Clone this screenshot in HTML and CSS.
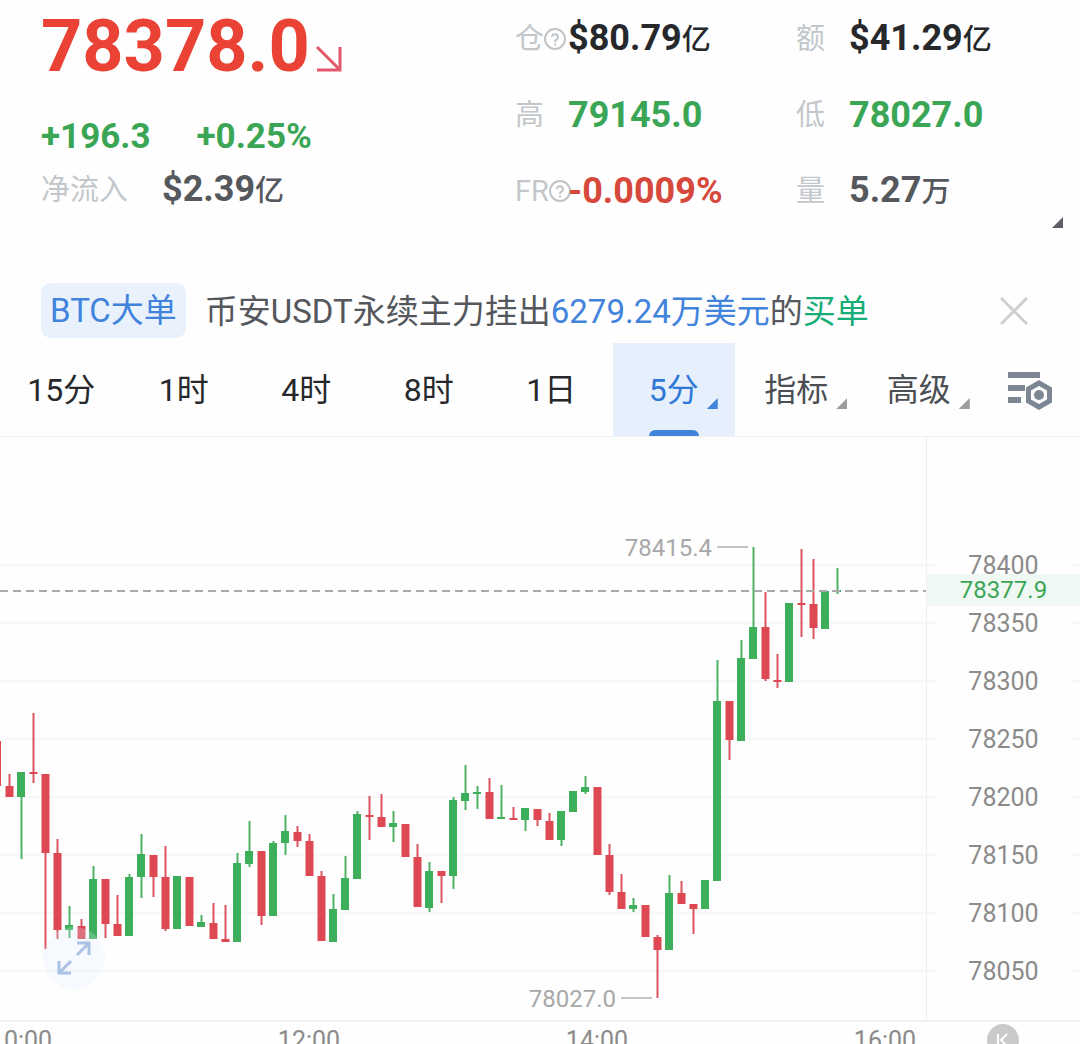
FILE: index.html
```html
<!DOCTYPE html>
<html lang="zh-CN">
<head>
<meta charset="utf-8">
<meta name="viewport" content="width=device-width, initial-scale=1">
<title>BTC 行情</title>
<link rel="stylesheet" href="styles.css">
</head>
<body>
<main class="app">
  <header class="quote">
    <section class="summary">
      <div class="price">
        <strong>78378.0</strong>
        <svg class="price-arrow" width="26" height="26" viewBox="0 0 26 26" fill="none" stroke="#e4586c" stroke-width="3"><path d="M1 1L24 24M1 24H24V1"/></svg>
      </div>
      <div class="change"><span>+196.3</span><span>+0.25%</span></div>
      <div class="inflow"><span class="label">净流入</span><span class="value muted">$2.39<span class="unit">亿</span></span></div>
    </section>
    <dl class="stats">
      <div class="stat">
        <dt class="label">仓<svg class="help" width="22" height="22" viewBox="0 0 22 22" fill="none" stroke="#bfc4c8" stroke-width="2"><circle cx="11" cy="11" r="10"/><path d="M8 9a3 3 0 1 1 4 3q-1 .5-1 2M11 15.500v2"/></svg></dt>
        <dd class="value">$80.79<span class="unit">亿</span></dd>
      </div>
      <div class="stat">
        <dt class="label">额</dt>
        <dd class="value">$41.29<span class="unit">亿</span></dd>
      </div>
      <div class="stat">
        <dt class="label">高</dt>
        <dd class="value up">79145.0</dd>
      </div>
      <div class="stat">
        <dt class="label">低</dt>
        <dd class="value up">78027.0</dd>
      </div>
      <div class="stat">
        <dt class="label">FR<svg class="help" width="22" height="22" viewBox="0 0 22 22" fill="none" stroke="#bfc4c8" stroke-width="2"><circle cx="11" cy="11" r="10"/><path d="M8 9a3 3 0 1 1 4 3q-1 .5-1 2M11 15.500v2"/></svg></dt>
        <dd class="value down">-0.0009%</dd>
      </div>
      <div class="stat">
        <dt class="label">量</dt>
        <dd class="value muted">5.27<span class="unit">万</span></dd>
      </div>
    </dl>
    <button class="more" type="button" aria-label="展开更多"><span class="corner"></span></button>
  </header>

  <section class="news">
    <span class="tag">BTC大单</span>
    <p class="news-text">币安USDT永续主力挂出<span class="amount">6279.24万美元</span>的<span class="buy">买单</span></p>
    <button class="close" type="button" aria-label="关闭">
      <svg width="28" height="28" viewBox="0 0 28 28" fill="none" stroke="#cfcfcf" stroke-width="3"><path d="M1 1L27 27M27 1L1 27"/></svg>
    </button>
  </section>

  <nav class="tabs">
    <button class="tab" type="button">15分</button>
    <button class="tab" type="button">1时</button>
    <button class="tab" type="button">4时</button>
    <button class="tab" type="button">8时</button>
    <button class="tab" type="button">1日</button>
    <button class="tab active" type="button"><span class="menu-label">5分<span class="corner"></span></span></button>
    <button class="tab soft" type="button"><span class="menu-label">指标<span class="corner"></span></span></button>
    <button class="tab soft" type="button"><span class="menu-label">高级<span class="corner"></span></span></button>
    <button class="settings" type="button" aria-label="图表设置">
      <svg width="46" height="40" viewBox="0 0 46 40" fill="none">
        <path d="M1 5H33M1 18H18M1 30H14" stroke="#7d8794" stroke-width="6"/>
        <path d="M32 13L42.500 19V31L32 37L21.500 31V19Z" stroke="#7d8794" stroke-width="5"/>
        <circle cx="32" cy="25" r="5" fill="#7d8794"/>
      </svg>
    </button>
  </nav>

  <section class="chart">
    <div class="plot">
      <svg class="candles" width="100%" height="583" role="img" aria-label="5分钟K线图">
        <g stroke="#f5f7f8" stroke-width="2">
          <line x2="100%" y1="128" y2="128"/><line x2="100%" y1="186" y2="186"/>
          <line x2="100%" y1="244" y2="244"/><line x2="100%" y1="302" y2="302"/>
          <line x2="100%" y1="360" y2="360"/><line x2="100%" y1="418" y2="418"/>
          <line x2="100%" y1="476" y2="476"/><line x2="100%" y1="534" y2="534"/>
        </g>
        <!-- the group keeps candle coordinates on the page's price scale -->
        <g transform="translate(0 -437)" fill="none">
          <path stroke="#db5561" stroke-width="2" d="M9.500 774V797M33.500 713V783M45.500 774V949M57.500 839V939M81.500 919V938M105.500 879V938M117.500 895V936M153.500 855V897M165.500 846V931M213.500 903V938M225.500 905V942M261.500 851V925M297.500 826V847M309.500 834V876M321.500 871V941M369.500 796V840M381.500 794V827M417.500 844V907M441.500 871V903M489.500 778V819M513.500 807V820M537.500 809V826M549.500 813V840M609.500 844V895M621.500 874V909M657.500 935V998M681.500 881V904M693.500 904V934M729.500 701V760M765.500 592V681M777.500 654V688M801.500 549V637M813.500 559V639"/>
          <path stroke="#dd4852" stroke-width="8" d="M-3 741V786M9.500 786V797M33.500 772V774M45.500 774V853M57.500 853V930M81.500 926V939M105.500 879V924M117.500 924V936M153.500 855V877M165.500 877V929M189.500 877V926M213.500 923V939M225.500 939V942M261.500 851V916M297.500 832V841M309.500 841V876M321.500 876V941M369.500 815V817M381.500 817V827M405.500 824V857M417.500 857V907M441.500 871V876M489.500 792V819M513.500 818V820M537.500 809V820M549.500 821V840M597.500 787V855M609.500 855V892M621.500 892V909M645.500 905V937M657.500 937V950M681.500 893V904M693.500 904V909M729.500 701V740M765.500 627V679M777.500 680V682M801.500 603V605M813.500 604V628"/>
          <path stroke="#4fb266" stroke-width="2" d="M21.500 772V859M69.500 906V938M93.500 866V939M129.500 874V936M141.500 834V898M201.500 915V926M237.500 853V942M249.500 821V867M273.500 841V916M285.500 815V855M333.500 894V942M345.500 856V910M357.500 811V879M393.500 811V842M429.500 862V912M453.500 797V889M465.500 765V810M477.500 786V809M501.500 785V818M525.500 809V831M561.500 811V846M585.500 776V794M633.500 898V912M669.500 875V950M717.500 660V881M741.500 640V740M753.500 547V659M837.500 568V594"/>
          <path stroke="#3daf5a" stroke-width="8" d="M21 772V797M69 925V930M93 879V939M129 877V936M141 854V877M177 876V929M201 922V927M237 863V942M249 851V864M273 843V916M285 831V843M333 909V942M345 878V910M357 814V879M393 823V827M429 871V908M453 800V876M465 793V801M477 792V794M501 817V819M525 808V820M561 811V840M573 791V812M585 787V792M633 905V909M669 893V950M705 880V909M717 701V881M741 658V741M753 627V659M789 603V682M825 591V629M837 590V592"/>
          <path stroke="#c4c4c4" stroke-width="2" d="M717 547H748M621 998H652"/>
          <text class="extreme" x="712" y="556">78415.4</text>
          <text class="extreme" x="616" y="1007">78027.0</text>
        </g>
        <line x2="100%" y1="154" y2="154" stroke="#aaa" stroke-width="2" stroke-dasharray="8 5"/>
      </svg>
      <button class="expand" type="button" aria-label="全屏">
        <svg width="34" height="34" viewBox="0 0 34 34" fill="none" stroke="#aac2e6" stroke-width="3"><path d="M20 2H32V14M32 2L20 14M2 20V32H14M2 32L14 20"/></svg>
      </button>
    </div>
    <div class="scale">
      <ol class="ticks">
        <li>78400</li><li>78350</li><li>78300</li><li>78250</li><li>78200</li><li>78150</li><li>78100</li><li>78050</li>
      </ol>
      <output class="last">78377.9</output>
    </div>
  </section>

  <footer class="times">
    <div class="hours"><span>10:00</span><span>12:00</span><span>14:00</span><span>16:00</span></div>
    <button class="latest" type="button" aria-label="回到最新">
      <svg width="32" height="32" viewBox="0 0 32 32" fill="none"><circle cx="16" cy="16" r="16" fill="#c9cacc"/><path d="M11 10V22M20 10L14 16L20 22" stroke="#fff" stroke-width="2"/></svg>
    </button>
  </footer>
</main>
</body>
</html>
```

FILE: styles.css
```css
* { box-sizing: border-box; }

body {
  margin: 0;
  height: 100vh;
  overflow: hidden;
  background: #fefefe;
  color: #26282c;
  font-family: Roboto, "Noto Sans CJK SC", sans-serif;
}

button {
  border: 0;
  padding: 0;
  background: none;
  color: inherit;
  font: inherit;
}

svg {
  display: block;
  flex: none;
}

/* Quote header */
.quote {
  position: relative;
  display: grid;
  grid-template-columns: 474fr 565fr;
  height: 283px;
  padding-left: 41px;
}

.price {
  display: flex;
  align-items: flex-end;
  gap: 6px;
  height: 94px;
  padding-bottom: 22px;
  color: #ea4335;
}

.price strong {
  height: 52px;
  font-size: 72px;
  line-height: 54px;
}

.change {
  display: flex;
  gap: 46px;
  height: 84px;
  align-items: center;
  color: #3aa655;
  font-size: 35px;
  font-weight: 700;
}

.inflow {
  display: flex;
  align-items: center;
  gap: 34px;
  height: 24px;
}

.label {
  display: flex;
  align-items: center;
  color: #c3c7cb;
  font-size: 29px;
  font-weight: 400;
  line-height: 36px;
}

.value {
  margin: 0;
  font-size: 36px;
  font-weight: 700;
  line-height: 36px;
  white-space: nowrap;
}

.unit {
  font-size: 29px;
  font-weight: 500;
}

.muted { color: #55585d; }
.up { color: #3aa655; }
.down { color: #d6483c; }

.stats {
  display: grid;
  grid-template-columns: 281fr 284fr;
  grid-auto-rows: 76px;
  margin: 0;
  padding-top: 1px;
}

.stat {
  display: grid;
  grid-template-columns: 53px auto;
  align-items: center;
  justify-content: start;
}

.more {
  position: absolute;
  right: 17px;
  bottom: 55px;
}

.corner {
  display: block;
  width: 11px;
  height: 11px;
  background: #5c5f63;
  clip-path: polygon(100% 0, 100% 100%, 0 100%);
}

/* Large-order news line */
.news {
  display: flex;
  align-items: center;
  height: 55px;
  padding: 0 52px 0 41px;
  font-size: 33px;
}

.tag {
  padding: 0 9px;
  border-radius: 10px;
  background: #e9f1fc;
  color: #4283dc;
  line-height: 55px;
}

.news-text {
  flex: 1;
  margin: 0 0 0 19px;
  padding-bottom: 4px;
  color: #54575b;
  white-space: nowrap;
}

.amount { color: #4283dc; }
.buy { color: #15ad78; }

/* Interval tabs */
.tabs {
  display: grid;
  grid-template-columns: repeat(8, 1fr) 100px;
  height: 99px;
  padding-top: 5px;
  border-bottom: 1px solid #eeeff0;
}

.tab {
  position: relative;
  display: flex;
  align-items: center;
  justify-content: center;
  padding-bottom: 5px;
  font-size: 32px;
}

.settings {
  display: grid;
  place-items: center;
}

.soft { color: #4b4e52; }

.active {
  background: #e6f0fc;
  color: #2f78d6;
}

.active::after {
  content: "";
  position: absolute;
  bottom: 0;
  width: 50px;
  height: 6px;
  border-radius: 6px 6px 0 0;
  background: #4283dc;
}

.menu-label { position: relative; }

.menu-label .corner {
  position: absolute;
  left: calc(100% + 8px);
  bottom: 1px;
  background: #9d9d9d;
}

.active .corner { background: #4283dc; }

/* Chart */
.chart {
  display: grid;
  grid-template-columns: 1fr 154px;
}

.plot {
  position: relative;
  min-width: 0;
}

.candles { overflow: hidden; }

.extreme {
  fill: #a8a8a8;
  font-size: 24px;
  text-anchor: end;
}

.expand {
  position: absolute;
  left: 43px;
  bottom: 31px;
  display: grid;
  place-items: center;
  width: 62px;
  height: 62px;
  border-radius: 50%;
  background: rgb(225 237 253 / 25%);
}

.scale {
  position: relative;
  border-left: 1px solid #eeeff0;
}

.ticks {
  margin: 0;
  padding: 99px 0 0;
  list-style: none;
  color: #8b8b8b;
  font-size: 25px;
}

.ticks li {
  display: flex;
  align-items: center;
  justify-content: space-between;
  height: 58px;
}

.ticks li::before,
.ticks li::after {
  content: "";
  width: 10px;
  height: 2px;
  background: #f5f7f8;
}

.last {
  position: absolute;
  top: 137px;
  left: 0;
  right: 0;
  background: #eff8f3;
  color: #3aa655;
  font-size: 24px;
  line-height: 32px;
  text-align: center;
}

/* Time scale */
.times {
  display: grid;
  grid-template-columns: 1fr 154px;
  border-top: 2px solid #f1f2f3;
}

.hours {
  display: flex;
  overflow: hidden;
  margin-left: -123px;
  padding-top: 4px;
  color: #8b8b8b;
  font-size: 25px;
  line-height: 29px;
}

.hours span {
  flex: 0 0 288px;
  text-align: center;
}

.latest {
  justify-self: center;
  padding-top: 2px;
}
```
